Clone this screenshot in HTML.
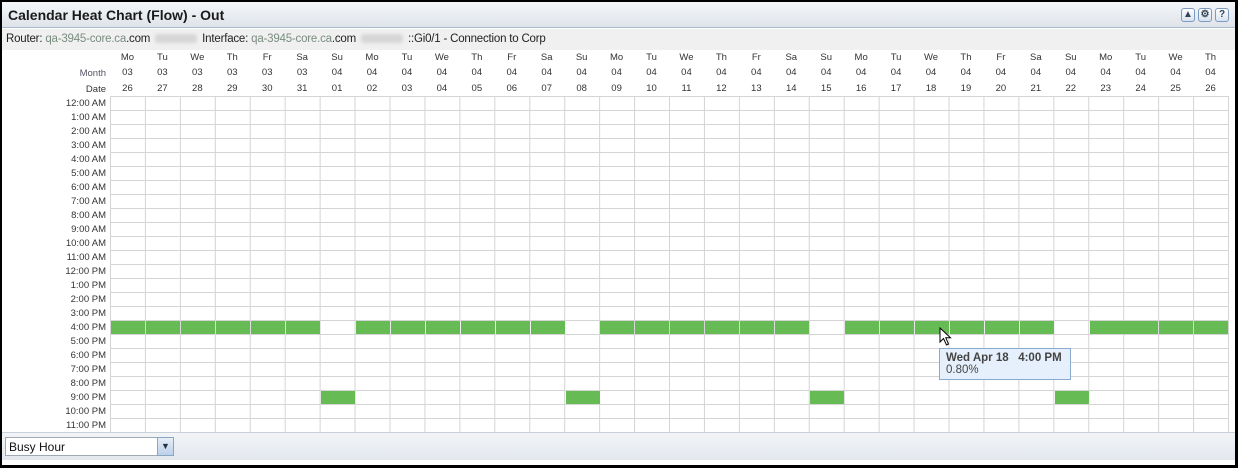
<!DOCTYPE html>
<html><head><meta charset="utf-8"><style>
*{margin:0;padding:0;box-sizing:border-box}
body{width:1238px;height:468px;background:#000;font-family:"Liberation Sans",sans-serif;overflow:hidden;position:relative}
#win{position:absolute;left:2px;top:2px;width:1233px;height:463px;background:#fff}
#title{position:absolute;left:0;top:0;width:100%;height:26px;background:linear-gradient(#f4f6f9,#dfe4ea);border-bottom:1px solid #a9b8c8;font-weight:bold;font-size:14px;color:#1a1a1a;padding:5px 0 0 6px}
.btn{position:absolute;top:6px;width:14px;height:14px;border:1px solid #7a9ac0;border-radius:3px;background:linear-gradient(#fff,#d6e2f0);font-size:10px;color:#345;text-align:center;line-height:12px;font-weight:bold}
#info{position:absolute;left:0;top:27px;width:100%;height:21px;background:#f0f0f0;font-size:11.5px;color:#222;padding:4px 0 0 4px;white-space:nowrap;letter-spacing:-0.2px}
.g{color:#7a8c80;}
.blur{display:inline-block;width:42px;height:9px;background:#d6d6d6;vertical-align:middle;border-radius:3px;filter:blur(1.5px);margin:0 2px}
.hdr{position:absolute;left:108px;display:flex;font-size:9.5px;color:#333}
.hdr div{width:34.95px;text-align:center}
.lbl{position:absolute;right:1129px;font-size:9.5px;color:#333;text-align:right;white-space:nowrap}
#grid{position:absolute;left:108px;top:94px;width:1119px;height:337px;
background-image:linear-gradient(90deg,#d4d4d4 1px,transparent 1px),linear-gradient(#d4d4d4 1px,transparent 1px);background-size:34.95px 14px;border-right:1px solid #d4d4d4}
.c{position:absolute;width:34px;height:13px;background:#66bb55}
#bot{position:absolute;left:0;top:430px;width:100%;height:28px;background:linear-gradient(#f2f4f7,#e3e8ee);border-top:1px solid #c8d0da}
#sel{position:absolute;left:3px;top:4px;width:153px;height:19px;border:1px solid #a0a8b4;background:#fff;font-size:12px;padding:2px 0 0 3px;color:#111}
#arr{position:absolute;left:155px;top:4px;width:17px;height:19px;border:1px solid #8aa4c4;background:linear-gradient(#e6eef8,#bcd0ea);font-size:9px;color:#234;text-align:center;line-height:17px}
#tip{position:absolute;left:937px;top:346px;width:132px;height:32px;background:#e6f0fc;border:1px solid #8aaad0;font-size:11.5px;color:#444;padding:3px 0 0 6px}
</style></head><body><div id="win">
<div id="title">Calendar Heat Chart (Flow) - Out
<div class="btn" style="left:1179px">▲</div><div class="btn" style="left:1196px">⚙</div><div class="btn" style="left:1213px">?</div></div>
<div id="info">Router: <span class="g">qa-3945-core.ca</span>.com <span class="blur"></span> Interface: <span class="g">qa-3945-core.ca</span>.com <span class="blur"></span> ::Gi0/1 - Connection to Corp</div>

<div class="hdr" style="top:50px"><div>Mo</div><div>Tu</div><div>We</div><div>Th</div><div>Fr</div><div>Sa</div><div>Su</div><div>Mo</div><div>Tu</div><div>We</div><div>Th</div><div>Fr</div><div>Sa</div><div>Su</div><div>Mo</div><div>Tu</div><div>We</div><div>Th</div><div>Fr</div><div>Sa</div><div>Su</div><div>Mo</div><div>Tu</div><div>We</div><div>Th</div><div>Fr</div><div>Sa</div><div>Su</div><div>Mo</div><div>Tu</div><div>We</div><div>Th</div></div>
<div class="hdr" style="top:65px"><div>03</div><div>03</div><div>03</div><div>03</div><div>03</div><div>03</div><div>04</div><div>04</div><div>04</div><div>04</div><div>04</div><div>04</div><div>04</div><div>04</div><div>04</div><div>04</div><div>04</div><div>04</div><div>04</div><div>04</div><div>04</div><div>04</div><div>04</div><div>04</div><div>04</div><div>04</div><div>04</div><div>04</div><div>04</div><div>04</div><div>04</div><div>04</div></div>
<div class="hdr" style="top:81px"><div>26</div><div>27</div><div>28</div><div>29</div><div>30</div><div>31</div><div>01</div><div>02</div><div>03</div><div>04</div><div>05</div><div>06</div><div>07</div><div>08</div><div>09</div><div>10</div><div>11</div><div>12</div><div>13</div><div>14</div><div>15</div><div>16</div><div>17</div><div>18</div><div>19</div><div>20</div><div>21</div><div>22</div><div>23</div><div>24</div><div>25</div><div>26</div></div>
<div class="lbl" style="top:66px;color:#556">Month</div>
<div class="lbl" style="top:82px">Date</div>

<div class="lbl" style="top:96px">12:00 AM</div><div class="lbl" style="top:110px">1:00 AM</div><div class="lbl" style="top:124px">2:00 AM</div><div class="lbl" style="top:138px">3:00 AM</div><div class="lbl" style="top:152px">4:00 AM</div><div class="lbl" style="top:166px">5:00 AM</div><div class="lbl" style="top:180px">6:00 AM</div><div class="lbl" style="top:194px">7:00 AM</div><div class="lbl" style="top:208px">8:00 AM</div><div class="lbl" style="top:222px">9:00 AM</div><div class="lbl" style="top:236px">10:00 AM</div><div class="lbl" style="top:250px">11:00 AM</div><div class="lbl" style="top:264px">12:00 PM</div><div class="lbl" style="top:278px">1:00 PM</div><div class="lbl" style="top:292px">2:00 PM</div><div class="lbl" style="top:306px">3:00 PM</div><div class="lbl" style="top:320px">4:00 PM</div><div class="lbl" style="top:334px">5:00 PM</div><div class="lbl" style="top:348px">6:00 PM</div><div class="lbl" style="top:362px">7:00 PM</div><div class="lbl" style="top:376px">8:00 PM</div><div class="lbl" style="top:390px">9:00 PM</div><div class="lbl" style="top:404px">10:00 PM</div><div class="lbl" style="top:418px">11:00 PM</div>

<div id="grid">
<div class="c" style="left:1px;top:225px"></div><div class="c" style="left:36px;top:225px"></div><div class="c" style="left:71px;top:225px"></div><div class="c" style="left:106px;top:225px"></div><div class="c" style="left:141px;top:225px"></div><div class="c" style="left:176px;top:225px"></div>
<div class="c" style="left:246px;top:225px"></div><div class="c" style="left:281px;top:225px"></div><div class="c" style="left:316px;top:225px"></div><div class="c" style="left:351px;top:225px"></div><div class="c" style="left:386px;top:225px"></div><div class="c" style="left:421px;top:225px"></div>
<div class="c" style="left:490px;top:225px"></div><div class="c" style="left:525px;top:225px"></div><div class="c" style="left:560px;top:225px"></div><div class="c" style="left:595px;top:225px"></div><div class="c" style="left:630px;top:225px"></div><div class="c" style="left:665px;top:225px"></div>
<div class="c" style="left:735px;top:225px"></div><div class="c" style="left:770px;top:225px"></div><div class="c" style="left:805px;top:225px"></div><div class="c" style="left:840px;top:225px"></div><div class="c" style="left:875px;top:225px"></div><div class="c" style="left:910px;top:225px"></div>
<div class="c" style="left:980px;top:225px"></div><div class="c" style="left:1014px;top:225px"></div><div class="c" style="left:1049px;top:225px"></div><div class="c" style="left:1084px;top:225px"></div>
<div class="c" style="left:211px;top:295px"></div><div class="c" style="left:456px;top:295px"></div><div class="c" style="left:700px;top:295px"></div><div class="c" style="left:945px;top:295px"></div>
</div>
<svg style="position:absolute;left:937px;top:325px" width="14" height="20" viewBox="0 0 14 20"><path d="M1 1 L1 15 L4.5 11.5 L7.5 18 L9.5 17 L6.8 10.8 L11.5 10.8 Z" fill="#fff" stroke="#000" stroke-width="1"/></svg>
<div id="tip"><b>Wed Apr 18 &nbsp; 4:00 PM</b><br>0.80%</div>
<div id="bot"><div id="sel">Busy Hour</div><div id="arr">▼</div></div>
</div></body></html>
